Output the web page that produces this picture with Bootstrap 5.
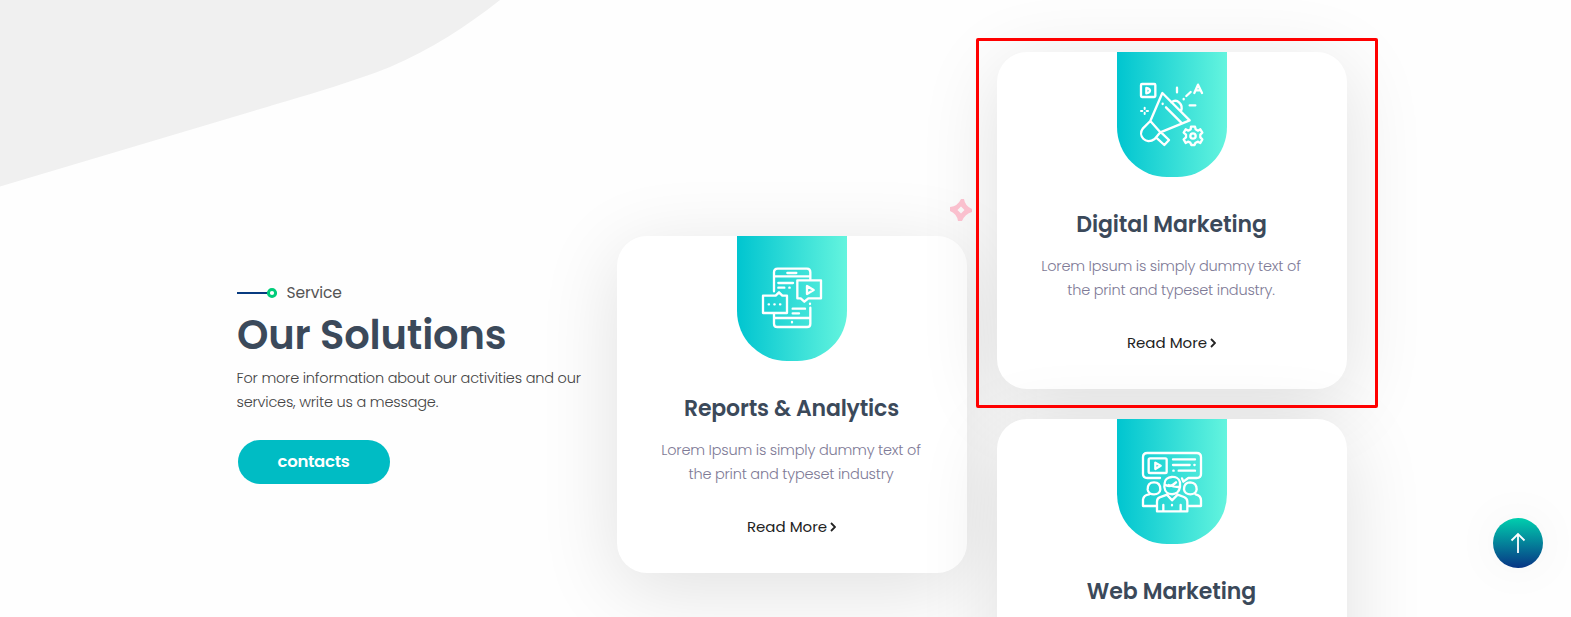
<!DOCTYPE html>
<html lang="en">
<head>
<meta charset="utf-8">
<meta name="viewport" content="width=device-width, initial-scale=1">
<title>Our Solutions</title>
<link href="https://cdn.jsdelivr.net/npm/bootstrap@5.3.0/dist/css/bootstrap.min.css" rel="stylesheet">
<style>
body{font-family:Poppins,Inter,"Open Sans",sans-serif;background:#fefefe;overflow:hidden}
.solutions{height:617px;padding-left:222px}
.wave{position:absolute;left:0;top:0}
.solution-row{width:1140px;--bs-gutter-x:30px}
.intro{padding-top:281px;color:#555}
.eyebrow{gap:8.500px;height:24px;font-size:15.5px;color:#555}
.eyebrow span{letter-spacing:-.1px}
.headline{font-size:40px;font-weight:600;line-height:50px;color:#3b495a;margin:5px 0 6px;white-space:nowrap;letter-spacing:-.15px}
.intro p{font-size:14.500px;line-height:24px;font-weight:300;color:#444;margin:0 0 26px -.5px;letter-spacing:-.2px}
.intro p span,.service-card p span{display:block;white-space:nowrap}
.btn-contact{width:152px;height:44px;border-radius:22px;margin-left:1px;background:#00bcc4;color:#fff;font-size:16.500px;font-weight:600;padding:0 1px 0 0;border:0;line-height:44px;letter-spacing:-.3px}
.service-card{height:337px;border:0;border-radius:30px;background:#fff;box-shadow:0 16px 80px rgba(0,0,0,.12);color:#3b495a}
.pill{width:110px;height:125px;border-radius:0 0 50px 50px;background:linear-gradient(90deg,#00c5d0,#64f4de)}
.pill svg{display:block;fill:none;stroke:#fff;stroke-width:7;stroke-linecap:round;stroke-linejoin:round}
.service-card h3{font-size:22px;font-weight:600;line-height:28px;margin:34px 1px 0 0;white-space:nowrap;letter-spacing:-.08px}
.service-card .t-r{letter-spacing:-.17px}
.service-card p{font-size:14.500px;font-weight:300;line-height:24px;color:#7e7a96;margin:15px 2px 0 0;letter-spacing:-.21px}
.more{font-size:15px;line-height:24px;margin-top:29px;margin-right:1px;color:#222;text-decoration:none;gap:3px}
.col-low{padding-top:236px}
.col-high{padding-top:52px}
.card-stack{gap:30px}
.frame{position:absolute;left:-21px;top:-14px;width:402px;height:370px;border:3px solid #f00;border-radius:2px;z-index:3}
.sparkle{position:absolute;left:949px;top:198px}
.to-top{position:absolute;left:1493px;top:518px;width:50px;height:50px;background:linear-gradient(#00cfae,#083585);box-shadow:0 0 50px rgba(0,0,0,.05)}
</style>
</head>
<body>
<main class="solutions position-relative overflow-hidden">
<svg class="wave" width="520" height="200"><path d="M0 0H500C467 26 430 50 390 67C350 83 300 97 267 107L0 186.500Z" fill="#f0f0f0"/></svg>
<div class="row solution-row mx-0 position-relative">
  <div class="col-4 intro">
    <div class="eyebrow d-flex align-items-center"><svg width="41" height="12"><path d="M0 6H31" stroke="#083b80" stroke-width="2"/><circle cx="35" cy="6" r="3.600" fill="#fff" stroke="#00cc7a" stroke-width="3"/></svg><span>Service</span></div>
    <h2 class="headline">Our Solutions</h2>
    <p><span>For more information about our activities and our</span><span>services, write us a message.</span></p>
    <a class="btn btn-contact" href="#">contacts</a>
  </div>
  <div class="col-4 col-low">
    <article class="card service-card align-items-center text-center">
      <div class="pill"><svg width="110" height="125" viewBox="21 18 330 375">
        <path d="M132 184V127Q132 116 143 116H231Q241 116 241 127V148M132 139H241M172 129H199M132 253V281Q132 291 142 291H231Q241 291 241 281V233M132 264H241M145 159H189M145 173H163M178 173H179M188 236H225M188 250H207M240 221V222M186 276V277"/>
        <path d="M202 151H273V205H235L223 215L212 205H202ZM231 168V192L251 180Z"/><path d="M99 197H137L147 187L157 197H171V249H99ZM116 223H117M133 223H134M150 223H151"/>
      </svg></div>
      <h3><span class="t-r">Reports &amp; Analytics</span></h3>
      <p><span>Lorem Ipsum is simply dummy text of</span><span>the print and typeset industry</span></p>
      <a class="more d-flex align-items-center" href="#"><span>Read More</span><svg width="6" height="10" viewBox="0 0 6 10"><path d="M1 1l4 4-4 4" fill="none" stroke="#222" stroke-width="1.800"/></svg></a>
    </article>
  </div>
  <div class="col-4 col-high">
    <div class="card-stack d-flex flex-column">
    <article class="card service-card align-items-center text-center">
      <div class="frame"></div>
      <div class="pill"><svg width="110" height="125" viewBox="21 6 330 375">
        <rect x="93" y="102" width="43" height="39" rx="3"/><path d="M109 114V130Q119 129 120 122Q119 115 109 114Z"/>
        <path d="M157 129L121 213L151 247L239 211ZM168 172L213 217M158 161V162M121 213L99 235C82 257 107 286 134 267L151 247M138 262L163 285L177 270L153 247M184 157C201 144 221 163 213 183M201 113V127M221 147V148M229 138L242 126M239 166H256"/>
        <path d="M253 129L264 104L276 129M258 121H271"/><path d="M104 173V177M104 188V192M93 183H97M110 183H114" stroke-width="6"/>
        <path d="M243 230H255L257 238L264 242L271 238L277 248L271 254V262L277 268L271 279L263 275L256 279L254 285H244L241 278L234 275L227 279L221 268L228 262V254L221 248L227 238L235 242L242 238Z"/><circle cx="249" cy="258" r="8"/>
      </svg></div>
      <h3>Digital Marketing</h3>
      <p><span>Lorem Ipsum is simply dummy text of</span><span>the print and typeset industry.</span></p>
      <a class="more d-flex align-items-center" href="#"><span>Read More</span><svg width="6" height="10" viewBox="0 0 6 10"><path d="M1 1l4 4-4 4" fill="none" stroke="#222" stroke-width="1.800"/></svg></a>
    </article>
    <article class="card service-card align-items-center text-center">
      <div class="pill"><svg width="110" height="125" viewBox="21 12 330 375">
        <path d="M150 189H112Q99 189 99 177V127Q99 114 112 114H260Q273 114 273 127V177Q273 189 260 189H235L220 200L216 190M189 133H255M189 150H239M253 150H254M190 167H191M206 167H255"/>
        <rect x="116" y="130" width="54" height="44" rx="4"/><path d="M136 143V162L152 152Z"/>
        <path d="M113 224Q112 202 132 202Q151 202 151 223C150 243 115 243 113 224ZM222 223Q222 202 241 202Q260 203 260 223C258 243 224 243 222 223ZM138 273H99V254Q101 240 117 238M257 238Q273 242 273 256V273H235"/>
        <path d="M164 206C163 182 205 178 210 202V216C206 245 166 245 163 216ZM164 208Q180 220 198 202M176 210Q192 217 209 216M171 239L149 247Q141 250 141 260V289H232V260Q232 250 222 246L203 239M171 239L186 256L203 239M160 270V289M212 270V289M186 270V271"/>
      </svg></div>
      <h3>Web Marketing</h3>
    </article>
    </div>
  </div>
</div>
<svg class="sparkle" width="24" height="24" viewBox="0 0 24 24"><path fill="#fac0ce" fill-rule="evenodd" d="M12 1H15Q16 8 23 11V14Q16 16 13 23H9Q8 16 1 13V9Q9 8 12 1ZM12 8.500L15.500 12L12 15.500L8.500 12Z"/></svg>
<a class="to-top rounded-circle d-flex align-items-center justify-content-center" href="#" aria-label="Back to top"><svg width="16" height="22" viewBox="0 0 16 22" fill="none" stroke="#fff" stroke-width="1.800"><path d="M8 21V2M1.500 8.500L8 2L14.500 8.500"/></svg></a>
</main>
<script src="https://cdn.jsdelivr.net/npm/bootstrap@5.3.0/dist/js/bootstrap.bundle.min.js"></script>
</body>
</html>
